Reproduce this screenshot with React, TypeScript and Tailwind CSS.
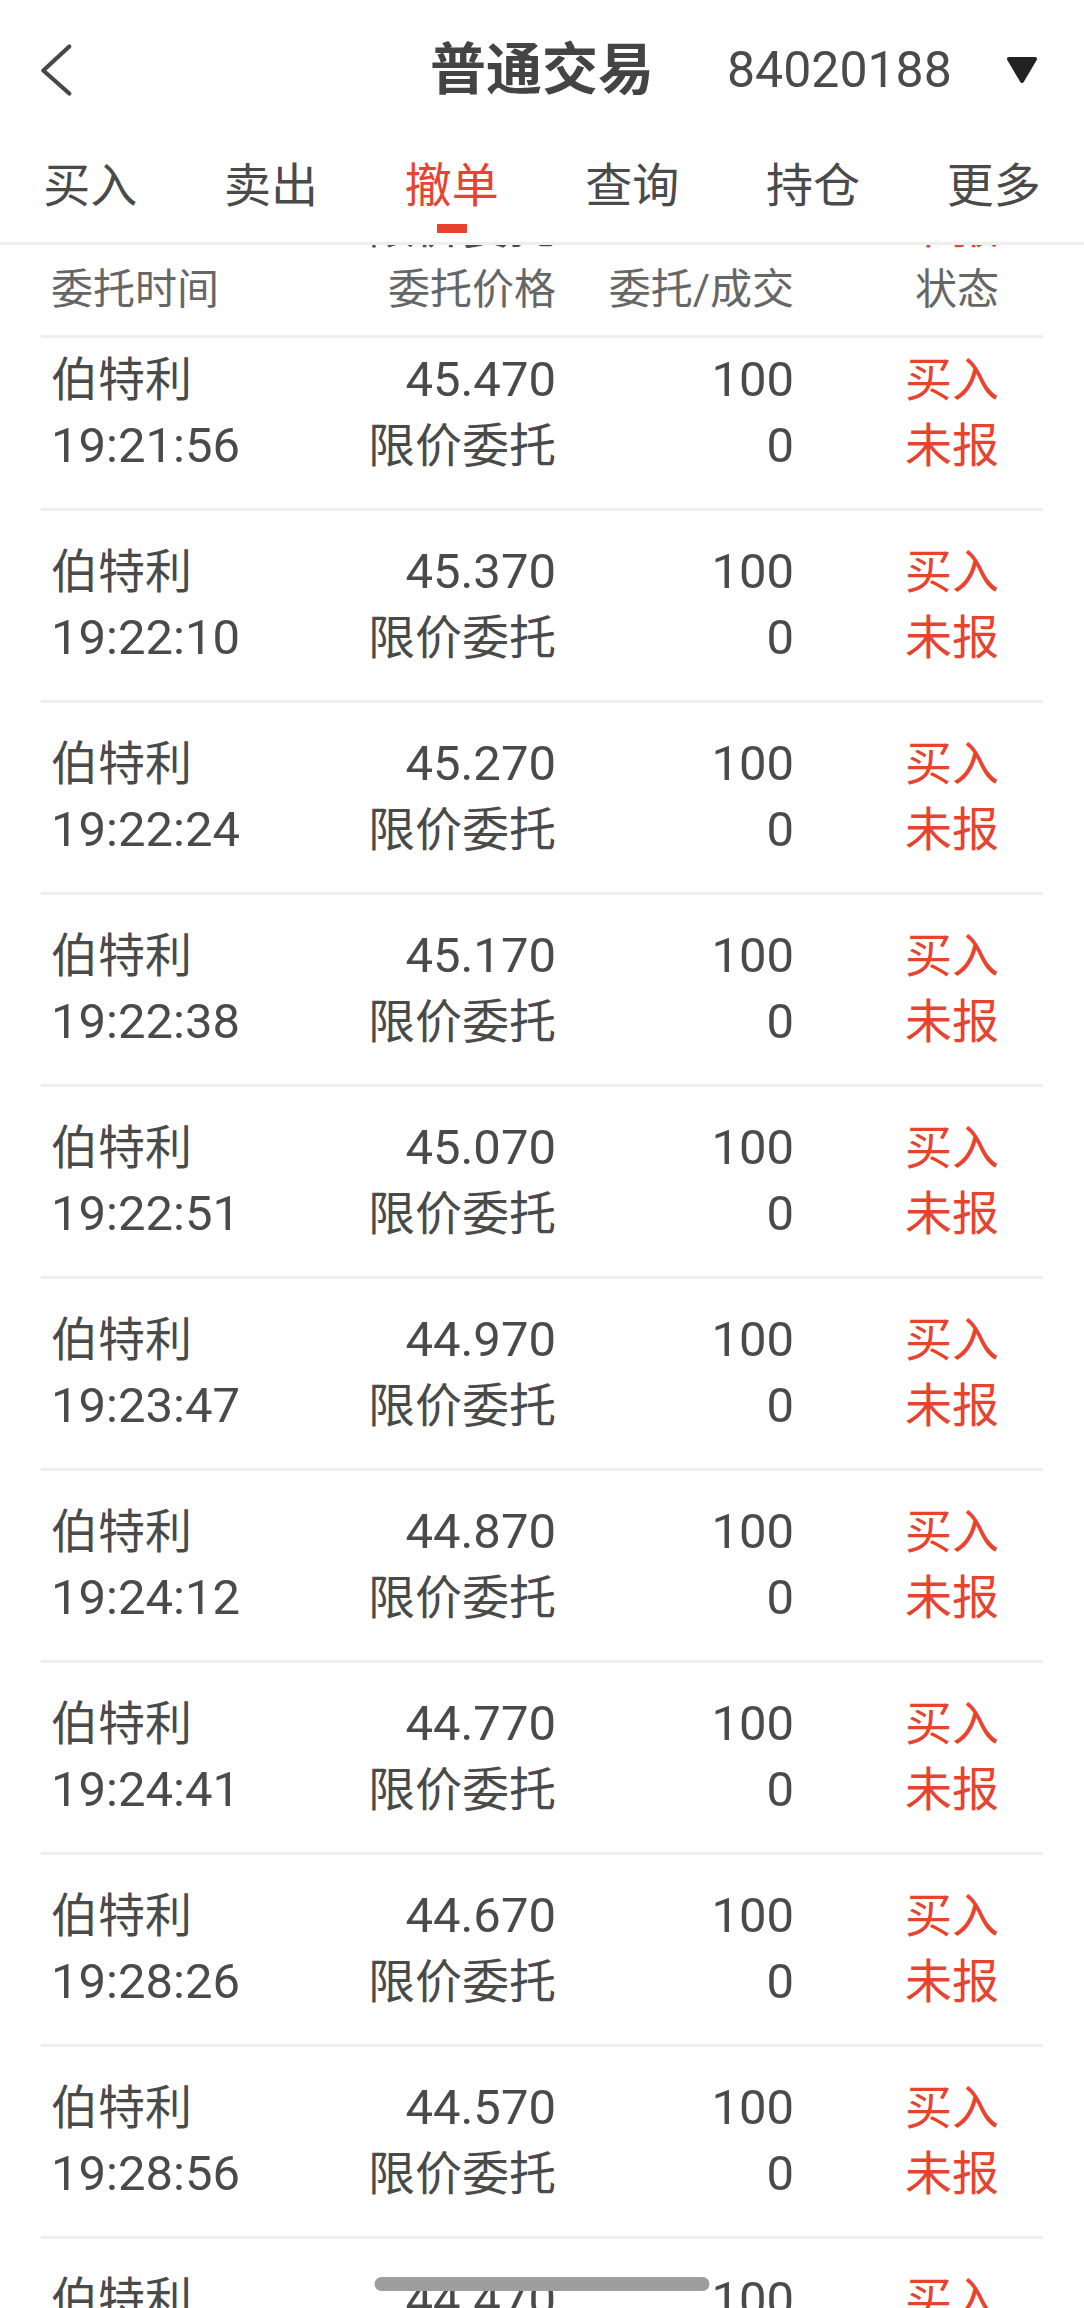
import React from 'react';

const tabs = ['买入', '卖出', '撤单', '查询', '持仓', '更多'];

const orders = [
  { price: '45.470', time: '19:21:56' },
  { price: '45.370', time: '19:22:10' },
  { price: '45.270', time: '19:22:24' },
  { price: '45.170', time: '19:22:38' },
  { price: '45.070', time: '19:22:51' },
  { price: '44.970', time: '19:23:47' },
  { price: '44.870', time: '19:24:12' },
  { price: '44.770', time: '19:24:41' },
  { price: '44.670', time: '19:28:26' },
  { price: '44.570', time: '19:28:56' },
  { price: '44.470', time: '19:29:13' },
];

const cols = 'grid grid-cols-[250px_255px_238px_205px] pl-[10px] pr-[44px]';

const OrderRow = ({ price, time, first }: { price: string; time: string; first?: boolean }) => (
  <div
    className={`mx-[41px] ${cols} border-b-[3px] border-[#eeeeee] pt-[28px] pb-[29px] text-[47px] leading-[66px] ${
      first ? '-mt-[19px]' : ''
    }`}
  >
    <div>
      <div>伯特利</div>
      <div className="text-[49px]">{time}</div>
    </div>
    <div className="text-right">
      <div className="text-[49px]">{price}</div>
      <div>限价委托</div>
    </div>
    <div className="text-right text-[49px]">
      <div>100</div>
      <div>0</div>
    </div>
    <div className="text-right text-[#e8432f]">
      <div>买入</div>
      <div>未报</div>
    </div>
  </div>
);

export default function App() {
  return (
    <div className="relative h-[2308px] w-[1084px] overflow-hidden bg-white font-['Roboto','Noto_Sans_CJK_SC',sans-serif] text-[#4a4a4a]">
      {/* top bar */}
      <header className="grid h-[139px] grid-cols-[1fr_auto_1fr] items-center">
        <div className="pl-[26px]">
          <svg width="60" height="60" viewBox="0 0 60 60" fill="none">
            <path
              d="M43.3 6.5 L17.3 30.5 L43.3 53.5"
              stroke="#474747"
              strokeWidth="4.2"
              strokeLinecap="round"
              strokeLinejoin="round"
            />
          </svg>
        </div>
        <h1 className="text-[56px] font-bold leading-none text-[#444444]">普通交易</h1>
        <div className="flex items-center pl-[73px]">
          <span className="text-[50px] leading-none">84020188</span>
          <svg className="ml-[52px]" width="36" height="32" viewBox="0 0 36 32">
            <polygon
              points="5,5 31,5 18,27"
              fill="#222222"
              stroke="#222222"
              strokeWidth="4"
              strokeLinejoin="round"
            />
          </svg>
        </div>
      </header>

      {/* tabs */}
      <nav className="flex border-b-[3px] border-[#eeeeee]">
        {tabs.map((t) => (
          <div key={t} className="flex flex-1 flex-col items-center pt-[14px] pb-[9px]">
            <span className={`text-[47px] leading-[66px] ${t === '撤单' ? 'text-[#e8432f]' : ''}`}>{t}</span>
            <span className={`mt-[5px] h-[9px] w-[30px] ${t === '撤单' ? 'bg-[#e8432f]' : ''}`} />
          </div>
        ))}
      </nav>

      {/* order list, scrolled by 51px */}
      <main className="h-[2063px] overflow-hidden">
        <div className="-translate-y-[51px]">
          <div className={`mx-[41px] ${cols} text-[47px] leading-[66px]`}>
            <div className="text-[49px]">19:21:42</div>
            <div className="text-right">限价委托</div>
            <div className="text-right text-[49px]">0</div>
            <div className="text-right text-[#e8432f]">未报</div>
          </div>
          <div className={`relative z-10 mx-[41px] ${cols} border-b-[3px] border-[#eeeeee] bg-white pb-[15px] text-[42px] leading-[60px] text-[#666666]`}>
            <div>委托时间</div>
            <div className="text-right">委托价格</div>
            <div className="text-right">委托/成交</div>
            <div className="text-right">状态</div>
          </div>
          {orders.map((o, i) => (
            <OrderRow key={o.time} price={o.price} time={o.time} first={i === 0} />
          ))}
        </div>
      </main>

      <div className="absolute bottom-[17px] left-1/2 h-[14px] w-[335px] -translate-x-1/2 rounded-full bg-[#9e9e9e]" />
    </div>
  );
}
